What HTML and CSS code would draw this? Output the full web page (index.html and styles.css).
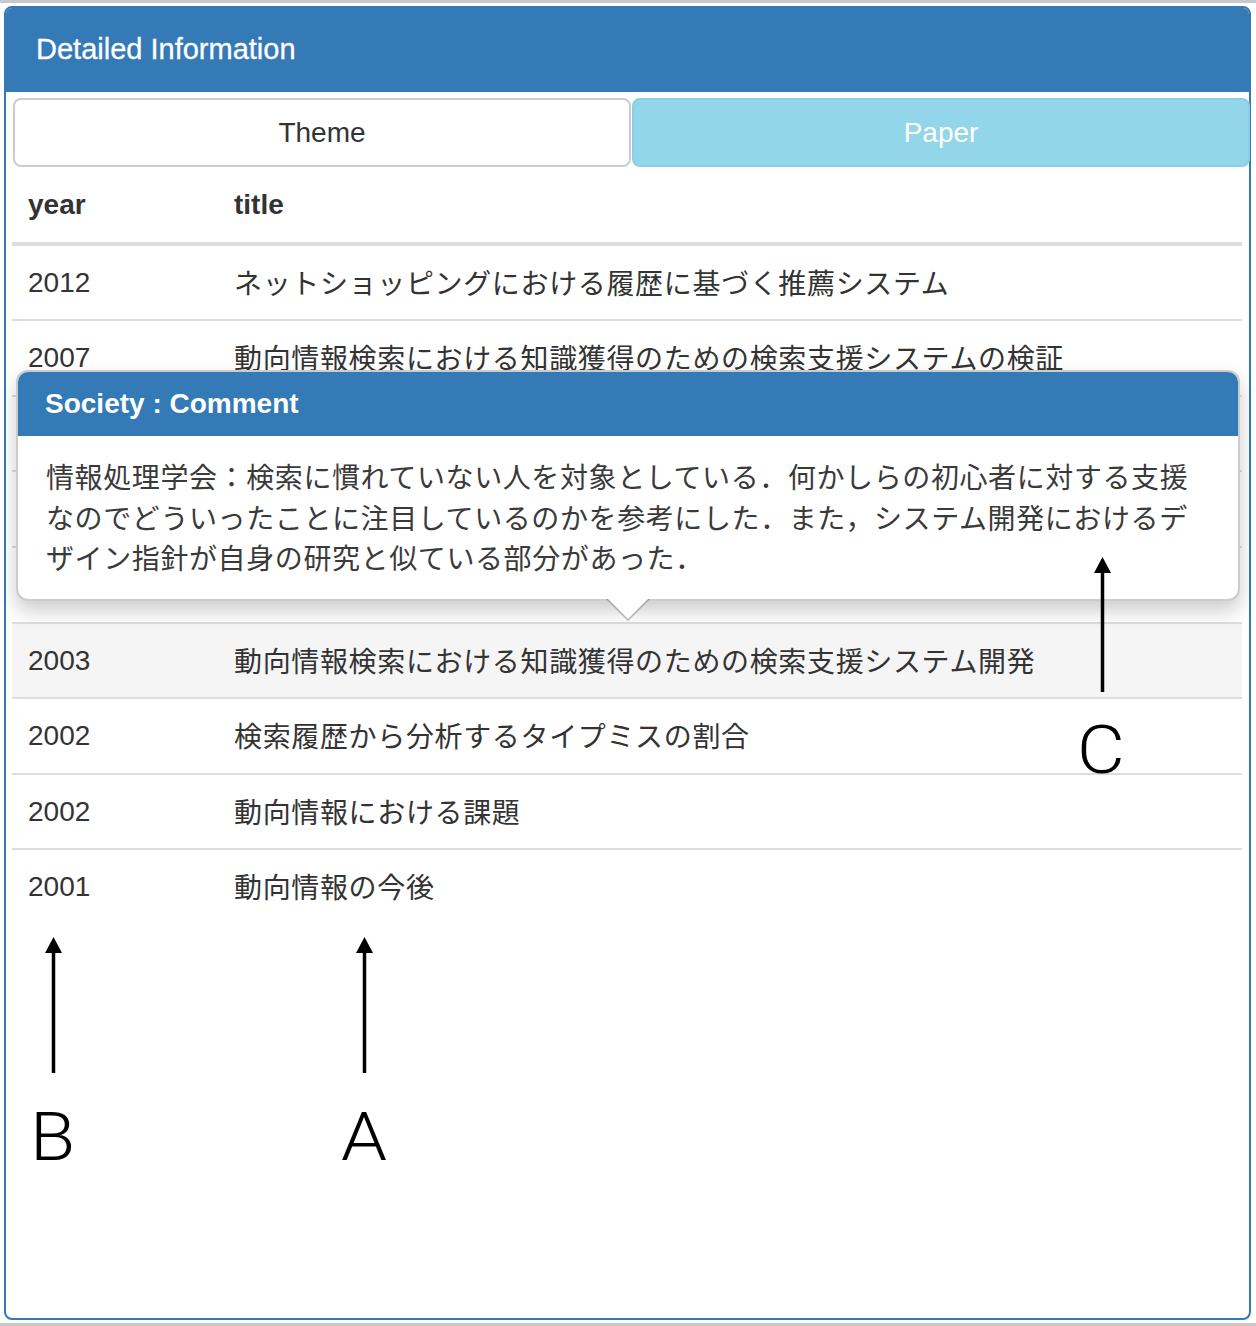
FILE: index.html
```html
<!DOCTYPE html>
<html lang="ja">
<head>
<meta charset="utf-8">
<title>Detailed Information</title>
<link rel="stylesheet" href="styles.css">
</head>
<body>
<div class="frame">
  <div class="panel">
    <div class="panel-heading"><h3 class="panel-title">Detailed Information</h3></div>
    <div class="panel-body">
      <div class="tabs">
        <button class="tab">Theme</button>
        <button class="tab active">Paper</button>
      </div>
      <div class="table-wrap">
        <table class="papers">
          <colgroup><col class="c-year"><col></colgroup>
          <thead>
            <tr><th>year</th><th>title</th></tr>
          </thead>
          <tbody>
            <tr><td>2012</td><td class="jp">ネットショッピングにおける履歴に基づく推薦システム</td></tr>
            <tr><td>2007</td><td class="jp">動向情報検索における知識獲得のための検索支援システムの検証</td></tr>
            <tr><td>&nbsp;</td><td class="jp">&nbsp;</td></tr>
            <tr><td>&nbsp;</td><td class="jp">&nbsp;</td></tr>
            <tr><td>&nbsp;</td><td class="jp">&nbsp;</td></tr>
            <tr class="hover"><td>2003</td><td class="jp">動向情報検索における知識獲得のための検索支援システム開発</td></tr>
            <tr><td>2002</td><td class="jp">検索履歴から分析するタイプミスの割合</td></tr>
            <tr><td>2002</td><td class="jp">動向情報における課題</td></tr>
            <tr><td>2001</td><td class="jp">動向情報の今後</td></tr>
          </tbody>
        </table>
        <div class="popover">
          <h3 class="popover-title">Society : Comment</h3>
          <div class="popover-content">情報処理学会：検索に慣れていない人を対象としている．何かしらの初心者に対する支援<br>なのでどういったことに注目しているのかを参考にした．また，システム開発におけるデ<br>ザイン指針が自身の研究と似ている部分があった．</div>
        </div>
      </div>
    </div>
  </div>

  <svg class="annot" width="1256" height="1326" viewBox="0 0 1256 1326" aria-hidden="true">
    <g fill="#000" stroke="#000">
      <line x1="53.5" y1="948" x2="53.5" y2="1070" stroke-width="3.5"/>
      <polygon points="53.5,934 45,950 62,950" stroke="none"/>
      <line x1="364.5" y1="948" x2="364.5" y2="1070" stroke-width="3.5"/>
      <polygon points="364.5,934 356,950 373,950" stroke="none"/>
      <line x1="1102.5" y1="568" x2="1102.5" y2="689" stroke-width="3.5"/>
      <polygon points="1102.5,554 1094,570 1111,570" stroke="none"/>
    </g>
  </svg>
  <span class="mark mark-b">B</span>
  <span class="mark mark-a">A</span>
  <span class="mark mark-c">C</span>
</div>
</body>
</html>
```

FILE: styles.css
```css
html, body {
  margin: 0;
  padding: 0;
  background: #fff;
}

body {
  font-family: "Liberation Sans", Arial, "Noto Sans CJK JP", sans-serif;
  color: #333;
}

.frame {
  position: relative;
  height: 1326px;
  box-sizing: border-box;
  border-top: 3px solid #c6c8cb;
  border-bottom: 3px solid #c6c8cb;
  padding: 3px 5px 3px 4px;
}

.panel {
  height: 100%;
  box-sizing: border-box;
  border: 2px solid #337ab7;
  border-radius: 8px;
  background: #fff;
}

.panel-heading {
  height: 84px;
  display: flex;
  align-items: center;
  padding: 0 30px;
  background: #337ab7;
  color: #fff;
  border-radius: 6px 6px 0 0;
}

.panel-title {
  margin: 0;
  font-size: 29px;
  font-weight: normal;
  line-height: 1.1;
  -webkit-text-stroke: 0.3px #fff;
}

.panel-body {
  padding: 6px 0 0 7px;
}

.tabs {
  display: grid;
  grid-template-columns: 1fr 1fr;
  gap: 1px;
  margin-right: -1px;
}

.tab {
  height: 69px;
  margin: 0;
  border: 2px solid #ccc;
  border-radius: 8px;
  background: #fff;
  color: #333;
  font-family: "Liberation Sans", Arial, sans-serif;
  font-size: 28px;
  padding: 0;
}

.tab.active {
  background: #94d6e9;
  border-color: #88d0e5;
  color: #fff;
}

.table-wrap {
  position: relative;
  margin: 0 7px 0 -1px;
}

.papers {
  width: 100%;
  table-layout: fixed;
  border-collapse: separate;
  border-spacing: 0;
}

.c-year {
  width: 206px;
}

.papers th,
.papers td {
  padding: 16px;
  line-height: 41.6px;
  font-size: 28px;
  text-align: left;
  vertical-align: top;
  white-space: nowrap;
}

.papers th {
  padding-top: 17px;
  font-weight: bold;
  border-bottom: 4px solid #ddd;
}

.papers td {
  border-top: 2px solid #ddd;
}

.papers tbody tr:first-child td {
  border-top: 0;
}

.papers td.jp {
  font-family: "Noto Sans CJK JP", sans-serif;
  letter-spacing: 0.65px;
}

.papers tr.hover td {
  background: #f5f5f5;
}

.popover {
  position: absolute;
  left: 4px;
  top: 203px;
  width: 1224px;
  box-sizing: border-box;
  border: 2px solid rgba(0, 0, 0, 0.2);
  border-radius: 12px;
  background: #fff;
  box-shadow: 0 10px 20px rgba(0, 0, 0, 0.2);
  z-index: 2;
}

.popover::before,
.popover::after {
  content: "";
  position: absolute;
  width: 0;
  height: 0;
  border-style: solid;
}

.popover::before {
  left: 588px;
  bottom: -22px;
  border-width: 22px 22px 0;
  border-color: rgba(0, 0, 0, 0.25) transparent transparent;
}

.popover::after {
  left: 590px;
  bottom: -20px;
  border-width: 20px 20px 0;
  border-color: #fff transparent transparent;
}

.popover-title {
  margin: 0;
  height: 64px;
  line-height: 64px;
  padding: 0 27px;
  background: #337ab7;
  color: #fff;
  font-size: 28px;
  font-weight: bold;
  border-radius: 10px 10px 0 0;
}

.popover-content {
  padding: 20px 27px 21px 28px;
  font-family: "Noto Sans CJK JP", sans-serif;
  font-size: 28px;
  line-height: 40.5px;
  letter-spacing: 0.6px;
  color: #3a3a3a;
  white-space: nowrap;
}

.annot {
  position: absolute;
  left: 0;
  top: 0;
  pointer-events: none;
  z-index: 5;
}

.mark {
  position: absolute;
  font-family: Roboto, "Liberation Sans", sans-serif;
  font-weight: 300;
  font-size: 67px;
  line-height: 1;
  color: #000;
  z-index: 5;
  transform: scaleX(1.1);
  transform-origin: left top;
}

.mark-b { left: 30px; top: 1101px; }
.mark-a { left: 341px; top: 1101px; }
.mark-c { left: 1077px; top: 714px; }
```
